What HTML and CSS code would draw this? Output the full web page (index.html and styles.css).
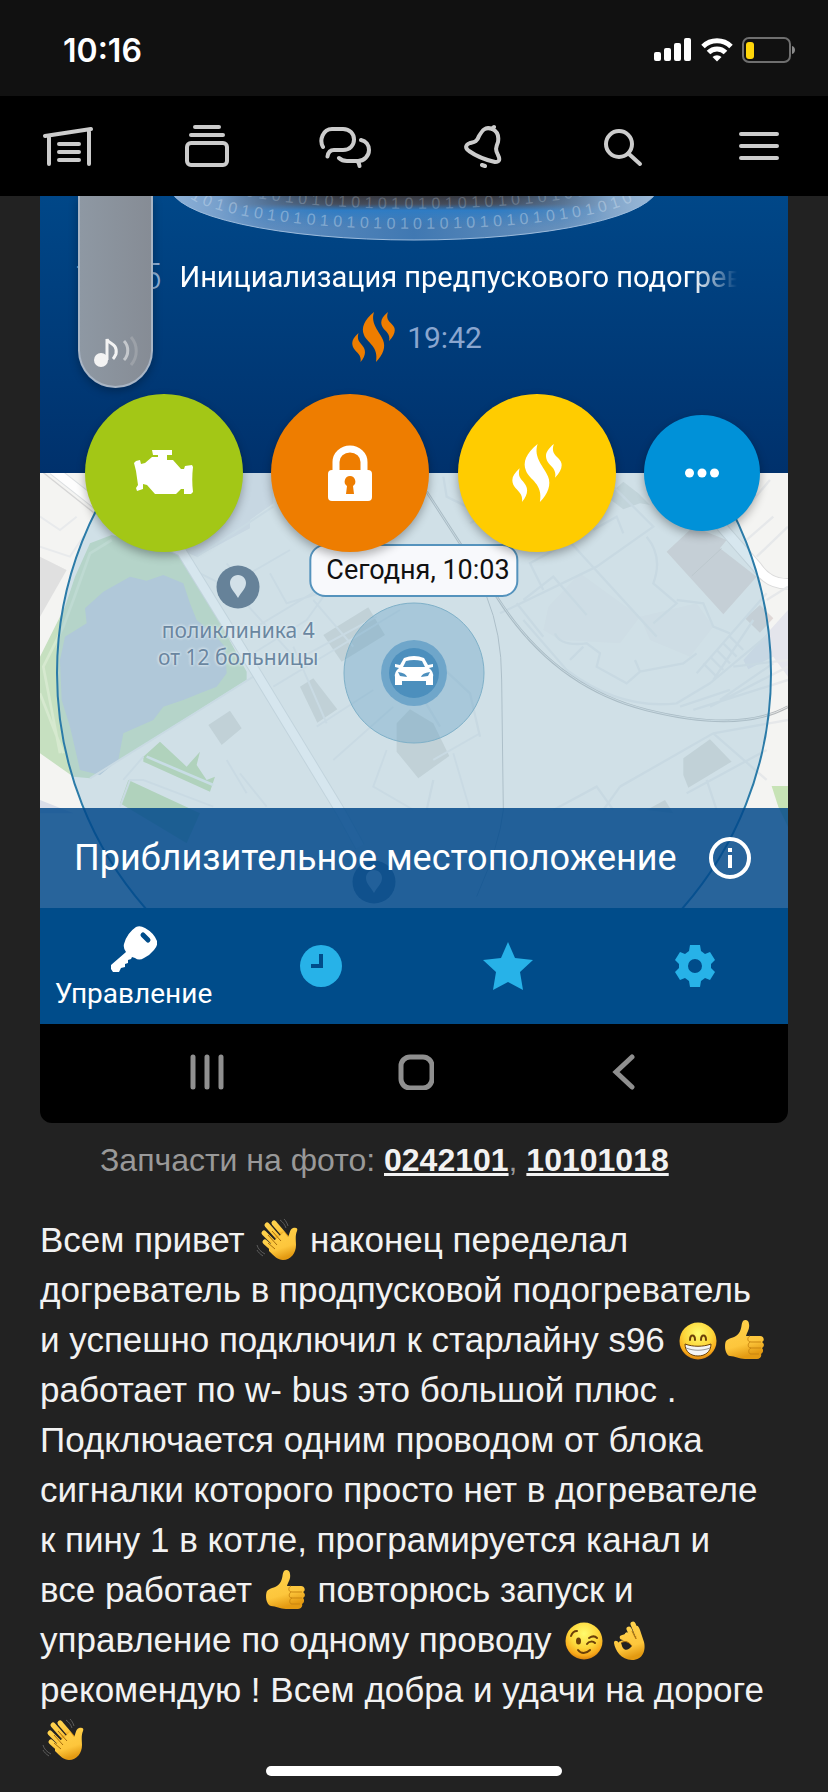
FILE: index.html
```html
<!DOCTYPE html>
<html lang="ru">

<head>
    <meta charset="UTF-8">
    <meta name="viewport" content="width=device-width, initial-scale=1.0">
    <title>Запись в бортжурнале</title>
    <link rel="stylesheet" href="styles.css">
</head>

<body>
    <!-- shared shapes -->
    <svg class="sprite" aria-hidden="true">
        <defs>
            <linearGradient id="skin" x1="0" y1="0" x2="0.3" y2="1">
                <stop offset="0" stop-color="#ffd24d" />
                <stop offset="0.7" stop-color="#fdc63c" />
                <stop offset="1" stop-color="#e39a12" />
            </linearGradient>
            <radialGradient id="face" cx="0.5" cy="0.3" r="0.7">
                <stop offset="0" stop-color="#fffb6e" />
                <stop offset="0.55" stop-color="#fdd63a" />
                <stop offset="0.85" stop-color="#f8a91b" />
                <stop offset="1" stop-color="#d9820c" />
            </radialGradient>
        </defs>
        <symbol id="flames" viewBox="0 0 43 50">
            <path d="M22 0C12 8 9 16 12 23C15 31 27 34 24 50C31 43 34 35 31 28C28 20 18 12 22 0Z" />
            <path d="M6.500 21C1 26 -1 30 1 35C3 40 10 42 8.500 50C13 45 14 40 12 36C10 31 4 30 6.500 21Z" />
            <path d="M36 0C30 5 28 9 30 14C32 19 39 21 37 29C42 24 44 19 42 15C39 10 33 9 36 0Z" />
        </symbol>
        <symbol id="pin" viewBox="0 0 44 44">
            <circle class="pin-disc" cx="22" cy="22" r="21.5" />
            <path class="pin-drop" d="M22 10c-5 0-8 4-8 8 0 6 5 9 8 15 3-6 8-9 8-15 0-4-3-8-8-8z" />
        </symbol>
        <symbol id="wave" viewBox="0 0 42 42">
            <g fill="none" stroke="url(#skin)" stroke-width="5" stroke-linecap="round">
                <path d="M18 4L30 18" />
                <path d="M11 6L26 23" />
                <path d="M8 14L22 28" />
                <path d="M9 23L19 32" />
            </g>
            <path d="M13 26L28 13l4 5c2-3 1-7 5-9 4-1 5 1 4 3-2 5-1 9-1 14 0 8-5 15-13 15-5 0-9-4-14-9z" fill="url(#skin)" />
            <path d="M16 12l9 10M12 16l9 10M12 24l7 6" fill="none" stroke="#a86d0c" stroke-width="1" />
            <path d="M24 1c3 2 5 5 6 8M28 0c2 2 3 4 4 7M1 26c1 4 4 7 8 9M1 31c1 2 3 4 6 6" fill="none" stroke="#5c5c5c" stroke-width="1" />
        </symbol>
        <symbol id="thumb" viewBox="0 0 42 42">
            <path d="M3 22c4-4 10-3 13-8 3-4 2-9 4-12 2-2 6-1 6 3 1 5-2 8-3 12h14c4 0 5 5 2 6 3 2 2 5 0 6 2 2 1 5-1 6 1 2-1 5-4 5H22c-6 0-10-3-15-3-5-1-6-11-4-15z" fill="url(#skin)" />
            <path d="M38 23H28c-4 0-4-5-1-6M38 29H28c-4 0-3-5-1-6M36 35h-8c-3 0-3-5 0-6" fill="none" stroke="#c98510" stroke-width="1" />
        </symbol>
        <symbol id="grin" viewBox="0 0 42 42">
            <circle cx="21" cy="22" r="18.500" fill="url(#face)" />
            <path d="M13 21c0-6 5-6 5 0M24 21c0-6 5-6 5 0" fill="none" stroke="#6b3f08" stroke-width="2" stroke-linecap="round" />
            <path d="M8 25c8 3 18 3 26 0 0 8-6 12-13 12S8 33 8 25z" fill="#f5f5f5" stroke="#6b3f08" stroke-width="1" />
            <path d="M9 29c8 3 16 3 24 0" fill="none" stroke="#999" stroke-width="1" />
        </symbol>
        <symbol id="wink" viewBox="0 0 42 42">
            <circle cx="21" cy="22" r="18.500" fill="url(#face)" />
            <ellipse cx="15.500" cy="22" rx="2.500" ry="3.500" fill="#6b3f08" />
            <path d="M8 17c1-3 3-5 6-5M26 19c3-2 6-2 8 0M24 25c2-3 6-3 8-1M15 31c3 4 8 4 12 0" fill="none" stroke="#6b3f08" stroke-width="2" stroke-linecap="round" />
        </symbol>
        <symbol id="okay" viewBox="0 0 42 42">
            <g fill="none" stroke="url(#skin)" stroke-width="5" stroke-linecap="round">
                <path d="M31 22L24 5" />
                <path d="M26 23L20 10" />
                <path d="M27 24L18 16" />
            </g>
            <path d="M11 17c5-3 12-2 17 3l-2-12c2-3 4 0 5 3l4 12c2 8-1 18-12 18C12 41 6 31 5 24c0-3 3-3 5 0-1-2 3-2 5-3-3 0-5-1-4-4z" fill="url(#skin)" />
            <path d="M12 24c4-3 8-1 11 3-3 4-7 5-9 2-1-1-1-3-2-5z" fill="#222" />
            <path d="M12 24c4-3 8-1 11 3M23 12l4 8" fill="none" stroke="#a86d0c" stroke-width="1" />
        </symbol>
    </svg>

    <div class="status-bar">
        <span class="clock">10:16</span>
        <div class="status-icons">
            <svg width="38" height="24" viewBox="0 0 38 24" fill="#fff">
                <rect x="0" y="14" width="7" height="9" rx="2" />
                <rect x="10" y="10" width="7" height="13" rx="2" />
                <rect x="20" y="5" width="7" height="18" rx="2" />
                <rect x="30" y="0" width="7" height="23" rx="2" />
            </svg>
            <svg width="32" height="24" viewBox="0 0 32 24" fill="none" stroke="#fff" stroke-width="5">
                <path d="M2 8.500a20 20 0 0 1 28 0" />
                <path d="M7.500 14.500a12 12 0 0 1 17 0" />
                <path d="M16 23.500l-4.500-4.500a6.500 6.500 0 0 1 9 0z" fill="#fff" stroke="none" />
            </svg>
            <svg width="54" height="26" viewBox="0 0 54 26">
                <rect x="1" y="1" width="47" height="24" rx="6" fill="none" stroke="#6f6f6f" stroke-width="2" />
                <rect x="4" y="5" width="8" height="17" rx="3" fill="#ffd60a" />
                <path d="M50 9c4 1 4 7 0 8z" fill="#8a8a8a" />
            </svg>
        </div>
    </div>

    <nav class="site-nav">
        <a href="#" aria-label="Гараж">
            <svg width="52" height="44" viewBox="0 0 52 44">
                <path d="M2 12L48 5M6 13v27M46 7v33M16 20h20M16 28h20M16 36h20" />
            </svg>
        </a>
        <a href="#" aria-label="Лента">
            <svg width="44" height="44" viewBox="0 0 44 44">
                <path d="M10 3h24M6 11h32" />
                <rect x="2" y="19" width="40" height="22" rx="4" />
            </svg>
        </a>
        <a href="#" aria-label="Сообщения">
            <svg width="52" height="44" viewBox="0 0 52 44">
                <path d="M4 23C0 16 4 5 13 5h11c7 0 11 5 11 10.500S31 26 24 26h-9c-4 0-6 3-6.500 6.500" />
                <path d="M42 16c5 1 8 5 8 10 0 6-5 11-11 11H28c-4 0-6-1-8-3M37 37c2 0 3 2 3.500 5" />
            </svg>
        </a>
        <a href="#" aria-label="Уведомления">
            <svg width="44" height="44" viewBox="0 0 44 44">
                <path d="M31 5C24 2 21 7 18 12C16 18 13 18 9 19C4 21 4 24 8 27C15 32 25 36 34 38C39 38 39 35 37 31C34 26 35 23 37 18C38 12 36 7 31 5zM31 5l2-2M21 41l3 1" />
            </svg>
        </a>
        <a href="#" aria-label="Поиск">
            <svg width="44" height="44" viewBox="0 0 44 44">
                <circle cx="20" cy="20" r="13" />
                <path d="M30 30l11 10" />
            </svg>
        </a>
        <a href="#" aria-label="Меню">
            <svg width="44" height="44" viewBox="0 0 44 44">
                <path d="M4 10h36M4 22h36M4 34h36" />
            </svg>
        </a>
    </nav>

    <main class="post">
        <figure class="photo">
            <section class="car-panel">
                <svg class="dome" viewBox="0 0 748 60" preserveAspectRatio="xMidYMin slice" aria-hidden="true">
                    <defs>
                        <linearGradient id="glass">
                            <stop offset="0" stop-color="#8fb2d8" />
                            <stop offset="0.2" stop-color="#5f8dbf" />
                            <stop offset="0.5" stop-color="#4078b2" />
                            <stop offset="0.8" stop-color="#6690bc" />
                            <stop offset="1" stop-color="#9dbbd9" />
                        </linearGradient>
                        <linearGradient id="under" x1="0" y1="0" x2="0" y2="1">
                            <stop offset="0" stop-color="#383a42" />
                            <stop offset="0.25" stop-color="#454c5a" />
                            <stop offset="0.45" stop-color="#2f7cc4" />
                            <stop offset="1" stop-color="#3b7fc0" stop-opacity="0" />
                        </linearGradient>
                        <linearGradient id="edges">
                            <stop offset="0" stop-color="#000" />
                            <stop offset="0.3" stop-color="#fff" />
                            <stop offset="0.7" stop-color="#fff" />
                            <stop offset="1" stop-color="#000" />
                        </linearGradient>
                        <mask id="soft">
                            <rect x="180" y="0" width="390" height="40" fill="url(#edges)" />
                        </mask>
                    </defs>
                    <ellipse cx="374" cy="-10" rx="244" ry="54" fill="url(#glass)" stroke="#9cbbdc" stroke-width="1" />
                    <rect x="180" y="0" width="390" height="32" fill="url(#under)" mask="url(#soft)" />
                    <path id="ring-outer" d="M150 2A230 40 0 0 0 598 2" fill="none" />
                    <text class="digits"><textPath href="#ring-outer">1 0 1 0 1 0 1 0 1 0 1 0 1 0 1 0 1 0 1 0 1 0 1 0 1 0 1 0 1 0 1 0 1 0</textPath></text>
                    <path id="ring-inner" d="M205 0A230 40 0 0 0 543 0" fill="none" />
                    <text class="digits faint"><textPath href="#ring-inner">0 1 0 1 0 1 0 1 0 1 0 1 0 1 0 1 0 1 0 1 0 1 0 1 0 1</textPath></text>
                </svg>
                <div class="event">
                    <span class="event-time">10:15</span>
                    <span class="event-name">Инициализация предпускового подогревателя</span>
                </div>
                <div class="heater">
                    <svg width="43" height="50" fill="#ee7d00"><use href="#flames" /></svg>
                    <span>19:42</span>
                </div>
                <div class="volume">
                    <svg width="46" height="32" viewBox="0 0 46 32">
                        <circle cx="8" cy="24" r="7" fill="#f3f3f3" />
                        <path d="M14 24V3c1 5 11 4 9 15-1 2-2 4-3 5" fill="none" stroke="#f3f3f3" stroke-width="3" />
                        <path d="M31 5c5 5 5 14 0 19" fill="none" stroke="#c5c8cc" stroke-width="3" />
                        <path d="M38 1c7 8 7 20 0 28" fill="none" stroke="#9ca1a8" stroke-width="3" />
                    </svg>
                </div>
                <div class="controls">
                    <button class="round green" aria-label="Двигатель">
                        <svg width="60" height="46" viewBox="0 0 60 46">
                            <path d="M18 0h20v5h-5v5h6l8 9h3l1-3 7-1 1 2c-1 8-1 17 0 25l-2 2h-7v-5h-3l-5 5H21l-8-9-4-1v5l-6 2-1-3 2-3-2-14-2-8 2-2 4-1 1 4 4-1 7-6h6V5h-5z" fill="#fff" />
                        </svg>
                    </button>
                    <button class="round orange" aria-label="Охрана">
                        <svg width="44" height="56" viewBox="0 0 44 56">
                            <path d="M8 27V17a14 13 0 0 1 28 0v10" fill="none" stroke="#fff" stroke-width="7" />
                            <rect x="0" y="25" width="44" height="31" rx="4" fill="#fff" />
                            <path d="M22 31a5.500 5.500 0 0 0-3 10l-1 8h8l-1-8a5.500 5.500 0 0 0-3-10z" fill="#ee7d00" />
                        </svg>
                    </button>
                    <button class="round yellow" aria-label="Подогрев">
                        <svg width="50" height="58" fill="#fff"><use href="#flames" /></svg>
                    </button>
                    <button class="round small blue" aria-label="Ещё">
                        <svg width="34" height="10" viewBox="0 0 34 10" fill="#fff">
                            <circle cx="4.500" cy="5" r="4.500" />
                            <circle cx="17" cy="5" r="4.500" />
                            <circle cx="29.500" cy="5" r="4.500" />
                        </svg>
                    </button>
                </div>
            </section>

            <section class="map">
                <svg class="map-art" viewBox="0 0 748 435" preserveAspectRatio="xMidYMid slice" aria-hidden="true">
                    <rect width="748" height="435" fill="#f4f4f2" />
                    <!-- west side -->
                    <g transform="translate(0 -13) scale(0.3333)">
                        <path d="M330 30L700 30L700 130L630 180L630 205L470 290L400 260L170 170L230 130z" fill="#e4e4ea" />
                        <path d="M0 290L80 330L0 470z" fill="#e0e0e0" />
                        <path d="M215 225L150 250L105 350L75 440L0 590V880L100 950L150 955L620 660V635L460 340L425 275z" fill="#c6e0c0" />
                        <path d="M215 240L150 280L100 420L70 500L10 620L60 880M0 700L70 880" fill="none" stroke="#d6e9cf" stroke-width="8" />
                        <path d="M135 445L190 395L270 350L320 362L370 345L430 370L450 430L470 480L520 520L555 560L560 640L530 680L480 700L430 720L370 740L340 780L250 820L235 900L180 945L120 930L90 800L65 720L60 600L75 530L140 490z" fill="#becbda" />
                        <path d="M310 890L360 845L440 920L480 875L470 915L500 960L525 950L510 995L310 905z" fill="#bedcab" />
                        <path d="M265 960L480 1060L440 1150L240 1030z" fill="#bedcab" />
                        <path d="M320 890L520 975" stroke="#e6eeee" stroke-width="8" />
                        <g fill="#dadbd8">
                            <path d="M570 752L605 805L545 855L505 795z" />
                            <path d="M820 655L892 748L832 788L780 680z" />
                            <path d="M850 525L985 442L1035 525L905 605z" />
                            <path d="M1070 790L1110 748L1180 790L1228 888L1135 955L1070 875z" />
                        </g>
                        <g fill="none" stroke="#e8eaec" stroke-width="6">
                            <path d="M470 290L700 140M460 330L560 380L750 270M650 500L1050 260M590 400L770 600L1010 470M640 580L800 480L900 340M760 560L860 790M820 420L940 560M700 680L1080 450M830 800L1000 690M880 900L1060 740M620 1000L560 900M680 1040L600 940M1040 870L1000 980L1120 1050M1180 900L1320 820M1240 880L1290 1050M250 960L310 890M240 1040L270 960L310 960L520 1040M690 340L740 430L840 400M560 310L600 360M0 170L60 210L110 170M0 260L90 290L130 230" />
                            <path d="M150 955L480 750L640 650" />
                        </g>
                        <path d="M40 30L230 180L425 275L650 640L905 1060L960 1160" fill="none" stroke="#dcdfe1" stroke-width="32" />
                        <path d="M40 30L230 180L425 275L650 640L905 1060L960 1160" fill="none" stroke="#fdfdfd" stroke-width="26" />
                        <path d="M0 30L170 165" stroke="#d5d5d5" stroke-width="4" />
                        <path d="M0 1020L100 1060H0z" fill="#d9dde8" />
                    </g>
                    <!-- east side -->
                    <g transform="translate(380 -13) scale(0.3333)">
                        <path d="M385 440L480 340L660 470L600 550L420 540L370 510zM660 470L830 430L880 500L810 590L690 540z" fill="#f0efee" />
                        <path d="M610 65L655 100L690 135L660 130L610 148L560 110z" fill="#dddfdd" />
                        <path d="M740 275L820 200L920 240L900 265L1010 350L910 463z" fill="#e2d8d5" />
                        <path d="M815 348L905 265" stroke="#c8c2c0" stroke-width="2" />
                        <path d="M975 475L1020 435L1060 475L1020 518z" fill="#e0d8d6" />
                        <path d="M970 600L1104 450V650L1060 590L985 628z" fill="#e4e5ec" />
                        <path d="M790 895L870 838L935 905L805 983L790 945z" fill="#dadbd8" />
                        <path d="M680 1050L735 1020L760 1060z" fill="#dadbd8" />
                        <path d="M1055 978H1104V1100L1075 1040z" fill="#c7e3b6" />
                        <path d="M870 160L1010 320Q1050 380 1120 370" fill="none" stroke="#dcdcdc" stroke-width="34" />
                        <path d="M870 160L1010 320Q1050 380 1120 370" fill="none" stroke="#fff" stroke-width="28" />
                        <g fill="none" stroke="#e6e8ea" stroke-width="7">
                            <path d="M70 50L80 110L140 140M150 190L530 -20M390 180L710 530M240 460L530 320L700 200L560 60M310 420L400 350L500 465M370 390L330 310L440 250M520 210L590 170L610 220M680 230Q730 290 700 370L770 430L700 490M770 420L850 430L880 500L930 520" />
                            <path d="M405 520Q420 560 500 550L540 580L530 620L620 670L660 635L790 610L830 580M645 600L660 635M450 600L490 560" />
                            <path d="M290 430L370 530M310 480L440 630Q600 750 770 730L870 670L1050 520M830 640L1040 400M850 610L890 650M870 590L910 630M890 570L930 610M910 550L950 590M930 530L970 570M780 740L930 690M820 750L1104 660M870 740L1104 620M900 720L1060 610M880 660L1000 480M940 620L1104 600" />
                            <path d="M600 980L880 820L1104 780M880 820L1040 960M600 980L550 1050M400 1050L530 980L580 1050M860 960L890 1050M800 1000L1040 870M940 190L1050 60M980 240L1060 170M1010 290L1104 200M1040 420L1104 380M0 560L150 700L180 830M0 700L60 800M20 1050L40 960" />
                        </g>
                        <path d="M20 95L120 250L230 410Q400 680 680 750T1104 740" fill="none" stroke="#b4b7b9" stroke-width="8" />
                        <path d="M20 95L120 250L230 410Q400 680 680 750T1104 740" fill="none" stroke="#e4e6e6" stroke-width="3" />
                        <path d="M200 410Q245 520 245 660L250 1050Q240 1150 170 1310" fill="none" stroke="#b8bcbf" stroke-width="3" />
                    </g>
                    <circle cx="374" cy="200" r="357" fill="#9cc4d8" fill-opacity="0.4" stroke="#2b7ba8" stroke-width="2" />
                    <circle cx="374" cy="200" r="70" fill="#5a9bc0" fill-opacity="0.34" stroke="#7fb0c8" stroke-width="1" />
                    <circle cx="374" cy="200" r="33" fill="#6fa6ca" />
                    <circle cx="374" cy="200" r="25" fill="#4c8fbd" />
                    <path d="M364 185q10-4 20 0l4 7 5-1v3l-4 1q5 4 4 9v8h-7v-4h-24v4h-7v-8q-1-5 4-9l-4-1v-3l5 1zM366 188l-3 6h22l-3-6q-8-2-16 0zM358 199l2 4 7 1q-1-4-9-5zM390 199q-8 1-9 5l7-1z" fill="#fff" fill-rule="evenodd" />
                    <use href="#pin" x="312" y="387" width="44" height="44" />
                </svg>
                <div class="place">
                    <svg width="44" height="44"><use href="#pin" /></svg>
                    <span>поликлиника 4<br>от 12 больницы</span>
                </div>
                <div class="bubble">Сегодня, 10:03</div>
                <div class="location">
                    <span>Приблизительное местоположение</span>
                    <svg width="42" height="42" viewBox="0 0 42 42">
                        <circle cx="21" cy="21" r="19" fill="none" stroke="#fff" stroke-width="4" />
                        <path d="M19 11h4v4h-4zM19 18h4v13h-4z" fill="#fff" />
                    </svg>
                </div>
            </section>

            <div class="tabs">
                <a href="#" class="tab active">
                    <svg width="46" height="46" viewBox="0 0 46 46">
                        <path d="M25 1q4-2 9 1 9 5 12 13 1 5-3 9-4 5-10 8-5 3-9 0l-3-1-1 2-3 1v3l-3 1 0 3-4 1-2 4-6 0-2-3v-4L15 26q-3-4-2-8Q16 7 25 1z" fill="#fff" />
                        <path d="M32 9l5 5" stroke="#004c8a" stroke-width="5" stroke-linecap="round" />
                    </svg>
                    <span>Управление</span>
                </a>
                <a href="#" class="tab" aria-label="История">
                    <svg width="42" height="42" viewBox="0 0 42 42">
                        <circle cx="21" cy="21" r="21" fill="#27b2e8" />
                        <path d="M21 9v12H11" fill="none" stroke="#004c8a" stroke-width="4" />
                    </svg>
                </a>
                <a href="#" class="tab" aria-label="Избранное">
                    <svg width="50" height="48" viewBox="0 0 50 48">
                        <path d="M25 0l7 16 18 2-13 12 3 18-15-8-15 8 3-18L0 18l18-2z" fill="#27b2e8" />
                    </svg>
                </a>
                <a href="#" class="tab" aria-label="Настройки">
                    <svg width="42" height="42" viewBox="0 0 42 42">
                        <path d="M16 0h10l1 6 4 3 5-2 5 8-4 4v4l4 4-5 8-5-2-4 3-1 6H16l-1-6-4-3-5 2-5-8 4-4v-4l-4-4 5-8 5 2 4-3zM21 14a7 7 0 1 0 0 14a7 7 0 1 0 0-14z" fill="#27b2e8" fill-rule="evenodd" />
                    </svg>
                </a>
            </div>

            <div class="system-nav">
                <button aria-label="Недавние">
                    <svg width="36" height="36" viewBox="0 0 36 36"><path d="M4 3v30M18 3v30M32 3v30" /></svg>
                </button>
                <button aria-label="Домой">
                    <svg width="36" height="36" viewBox="0 0 36 36"><rect x="3" y="3" width="31" height="31" rx="9" /></svg>
                </button>
                <button aria-label="Назад">
                    <svg width="36" height="36" viewBox="0 0 36 36"><path d="M25 3L9 18l16 15" /></svg>
                </button>
            </div>
        </figure>

        <p class="parts">Запчасти на фото: <a href="#">0242101</a>, <a href="#">10101018</a></p>

        <p class="text">
            Всем привет <svg class="emoji"><use href="#wave" /></svg> наконец переделал<br>
            догреватель в продпусковой подогреватель<br>
            и успешно подключил к старлайну s96 <svg class="emoji"><use href="#grin" /></svg><svg class="emoji"><use href="#thumb" /></svg><br>
            работает по w- bus это большой плюс .<br>
            Подключается одним проводом от блока<br>
            сигналки которого просто нет в догревателе<br>
            к пину 1 в котле, програмируется канал и<br>
            все работает <svg class="emoji"><use href="#thumb" /></svg> повторюсь запуск и<br>
            управление по одному проводу <svg class="emoji"><use href="#wink" /></svg><svg class="emoji"><use href="#okay" /></svg><br>
            рекомендую ! Всем добра и удачи на дороге<br>
            <svg class="emoji"><use href="#wave" /></svg>
        </p>
    </main>
    <div class="home-indicator"></div>
</body>

</html>
```

FILE: styles.css
```css
* {
    box-sizing: border-box;
}

body {
    margin: 0;
    background-color: #222;
    color: #f2f2f2;
    font-family: "Liberation Sans", Arial, sans-serif;
}

svg {
    display: block;
}

button {
    padding: 0;
    border: none;
    background: none;
    cursor: pointer;
}

.sprite {
    position: absolute;
    width: 0;
    height: 0;
}

/* Phone status bar */
.status-bar {
    display: flex;
    justify-content: space-between;
    align-items: center;
    height: 96px;
    padding: 4px 32px 0 63px;
    background-color: #111;
}

.clock {
    color: #fff;
    font-family: Inter, sans-serif;
    font-size: 32px;
    font-weight: 600;
}

.status-icons {
    display: flex;
    align-items: center;
    gap: 9px;
}

/* Site navigation */
.site-nav {
    display: grid;
    grid-template-columns: repeat(6, 1fr);
    height: 100px;
    background-color: #000;
}

.site-nav a {
    display: flex;
    justify-content: center;
    align-items: center;
}

.site-nav svg {
    fill: none;
    stroke: #ccc;
    stroke-width: 4;
    stroke-linecap: round;
    stroke-linejoin: round;
}

.post {
    padding: 0 40px;
}

/* Photo with the car app */
.photo {
    margin: 0;
    border-radius: 0 0 12px 12px;
    overflow: hidden;
    color: #fff;
    font-family: Roboto, sans-serif;
}

.car-panel {
    position: relative;
    z-index: 1;
    height: 277px;
    background: linear-gradient(#004788, #00316c);
}

.dome {
    width: 100%;
    height: 60px;
}

.digits {
    fill: #d6e4f2;
    fill-opacity: 0.4;
    font-family: "Liberation Sans", Arial, sans-serif;
    font-size: 16px;
}

.digits.faint {
    fill-opacity: 0.25;
}

.event {
    display: flex;
    align-items: center;
    gap: 18px;
    height: 42px;
    padding: 0 51px 0 34px;
}

.event-time {
    color: #8fb0d6;
    font-size: 36px;
    font-weight: 300;
}

.event-name {
    flex: 1;
    overflow: hidden;
    white-space: nowrap;
    font-size: 29px;
    -webkit-mask-image: linear-gradient(90deg, #000 92%, transparent);
    mask-image: linear-gradient(90deg, #000 92%, transparent);
}

.heater {
    display: flex;
    justify-content: center;
    align-items: center;
    gap: 12px;
    margin-top: 14px;
    padding-left: 6px;
    color: #8aa6cf;
    font-size: 30px;
}

.volume {
    position: absolute;
    top: 0;
    left: 38px;
    display: flex;
    justify-content: center;
    align-items: flex-end;
    width: 75px;
    height: 192px;
    padding-bottom: 18px;
    border: 2px solid #a9b5c4;
    border-top: none;
    border-radius: 0 0 38px 38px;
    background: linear-gradient(90deg, #8e98a3, #868c95);
    box-shadow: 0 3px 10px rgba(0, 0, 0, 0.3);
}

.controls {
    position: absolute;
    right: 0;
    bottom: -79px;
    left: 0;
    display: flex;
    justify-content: space-between;
    align-items: center;
    padding: 0 28px 0 45px;
}

.round {
    display: flex;
    justify-content: center;
    align-items: center;
    width: 158px;
    height: 158px;
    border-radius: 50%;
    box-shadow: 0 4px 10px rgba(0, 0, 0, 0.3);
}

.round.small {
    width: 116px;
    height: 116px;
}

.green {
    background-color: #a3c716;
}

.orange {
    background-color: #ee7d00;
}

.yellow {
    background-color: #fc0;
}

.blue {
    background-color: #0091d8;
}

/* Map */
.map {
    position: relative;
    height: 435px;
}

.map-art {
    width: 100%;
    height: 100%;
}

.pin-disc {
    fill: #668299;
}

.pin-drop {
    fill: #d2e0e8;
}

.place {
    position: absolute;
    top: 92px;
    left: 118px;
    display: flex;
    flex-direction: column;
    align-items: center;
    gap: 8px;
    color: #6a86a0;
    font-family: "Noto Sans", sans-serif;
    font-size: 21px;
    line-height: 27px;
    text-align: center;
    text-shadow: 0 0 3px #e4eef3, 0 0 3px #e4eef3;
}

.bubble {
    position: absolute;
    top: 71px;
    left: 50%;
    padding: 0 7px 0 15px;
    border: 2px solid #5593bd;
    border-radius: 16px;
    background-color: #f8f9fc;
    color: #111;
    font-size: 27px;
    line-height: 49px;
    white-space: nowrap;
    transform: translateX(-50%);
}

.location {
    position: absolute;
    right: 0;
    bottom: 0;
    left: 0;
    display: flex;
    justify-content: space-between;
    align-items: center;
    height: 100px;
    padding: 0 37px 0 34px;
    background-color: rgba(0, 72, 138, 0.84);
    font-size: 36px;
}

/* App tabs */
.tabs {
    display: grid;
    grid-template-columns: repeat(4, 1fr);
    height: 116px;
    background-color: #004c8a;
}

.tab {
    display: flex;
    flex-direction: column;
    justify-content: center;
    align-items: center;
    color: #fff;
    font-size: 28px;
    text-decoration: none;
}

.tab.active {
    gap: 5px;
    padding-top: 3px;
}

.system-nav {
    display: grid;
    grid-template-columns: repeat(3, 1fr);
    height: 99px;
    padding: 0 58px 4px 62px;
    background-color: #000;
}

.system-nav button {
    display: flex;
    justify-content: center;
    align-items: center;
}

.system-nav svg {
    fill: none;
    stroke: #8f8f8f;
    stroke-width: 5;
    stroke-linecap: round;
}

/* Post text */
.parts {
    margin: 12px 60px 0;
    color: #999;
    font-size: 32px;
    line-height: 50px;
}

.parts a {
    color: #f2f2f2;
    font-weight: bold;
}

.text {
    margin: 30px 0 0;
    font-size: 35px;
    line-height: 50px;
    white-space: nowrap;
}

.emoji {
    display: inline-block;
    width: 42px;
    height: 42px;
    margin: 0 2px;
    vertical-align: -9px;
}

.home-indicator {
    position: fixed;
    bottom: 16px;
    left: 50%;
    width: 296px;
    height: 10px;
    border-radius: 5px;
    background-color: #fff;
    transform: translateX(-50%);
}
```
